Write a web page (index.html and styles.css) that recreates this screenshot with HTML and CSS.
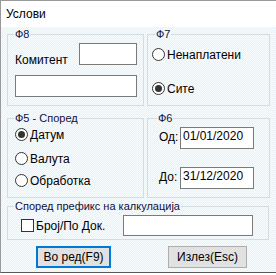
FILE: index.html
```html
<!DOCTYPE html>
<html lang="mk">
<head>
    <meta charset="UTF-8">
    <title>Услови</title>
    <link rel="stylesheet" href="styles.css">
</head>
<body>
    <div class="window">
        <div class="title">Услови</div>
        <div class="content">
            <div class="groups">
                <fieldset class="group g-f8">
                    <legend>Ф8</legend>
                    <div class="komitent">
                        <span class="komitent-label">Комитент</span>
                        <span class="textbox small"></span>
                    </div>
                    <span class="textbox wide"></span>
                </fieldset>

                <fieldset class="group g-f7">
                    <legend>Ф7</legend>
                    <label class="option"><span class="radio"></span>Ненаплатени</label>
                    <label class="option"><span class="radio checked"></span>Сите</label>
                </fieldset>

                <fieldset class="group g-f5">
                    <legend>Ф5 - Според</legend>
                    <label class="option"><span class="radio checked"></span>Датум</label>
                    <label class="option"><span class="radio"></span>Валута</label>
                    <label class="option"><span class="radio"></span>Обработка</label>
                </fieldset>

                <fieldset class="group g-f6">
                    <legend>Ф6</legend>
                    <div class="date-row">
                        <span class="date-label">Од:</span>
                        <span class="textbox date">01/01/2020</span>
                    </div>
                    <div class="date-row">
                        <span class="date-label">До:</span>
                        <span class="textbox date">31/12/2020</span>
                    </div>
                </fieldset>
            </div>

            <fieldset class="group g-prefix">
                <legend>Според префикс на калкулација</legend>
                <div class="prefix-row">
                    <label class="option"><span class="checkbox"></span>Број/По Док.</label>
                    <span class="textbox prefix"></span>
                </div>
            </fieldset>

            <div class="buttons">
                <button class="btn default">Во ред(F9)</button>
                <button class="btn cancel">Излез(Esc)</button>
            </div>
        </div>
    </div>
</body>
</html>
```

FILE: styles.css
```css
* {
    margin: 0;
    padding: 0;
    box-sizing: border-box;
}

body {
    font-family: 'Liberation Sans', Arial, sans-serif;
    font-size: 11px;
    color: #000;
    background: #fff;
}

.window {
    width: 276px;
    height: 273px;
    border-left: 1px solid #9a9a9a;
    border-top: 1px solid #9a9a9a;
    border-bottom: 1px solid #5a5a5a;
    display: flex;
    flex-direction: column;
}

.title {
    height: 26px;
    line-height: 26px;
    padding-left: 5px;
    font-size: 12px;
    background: #fff;
}

.content {
    flex: 1;
    padding: 1px 0 0 6px;
    background: repeating-conic-gradient(#e7f3fc 0 25%, #f6fbfe 0 50%) 0 0 / 2px 2px;
}

.groups {
    display: grid;
    grid-template-columns: 137px 123px;
    grid-template-rows: 78px 86px;
    column-gap: 3px;
    row-gap: 6px;
}

.group {
    border: 1px solid #d4dce3;
    display: flex;
    flex-direction: column;
}

.group legend {
    line-height: 13px;
    padding: 0 1px;
    color: #10103a;
}

.textbox {
    display: block;
    background: #fff;
    border: 1px solid #7a7a7a;
}

/* Ф8 */
.g-f8 {
    padding: 2px 6px 0 7px;
}

.g-f8 legend {
    margin-left: -1px;
}

.komitent {
    display: flex;
    align-items: flex-start;
    justify-content: space-between;
    height: 22px;
}

.komitent-label {
    margin-top: 10px;
    font-size: 12px;
}

.textbox.small {
    width: 58px;
    height: 22px;
}

.textbox.wide {
    width: 122px;
    height: 22px;
    margin-top: 10px;
}

/* radio / checkbox */
.option {
    display: flex;
    align-items: center;
    height: 15px;
    white-space: nowrap;
    font-size: 12px;
}

.radio {
    width: 13px;
    height: 13px;
    border: 1px solid #333;
    border-radius: 50%;
    background: #fff;
    margin-right: 2px;
    display: flex;
    align-items: center;
    justify-content: center;
}

.radio.checked::after {
    content: '';
    width: 7px;
    height: 7px;
    border-radius: 50%;
    background: #333;
}

.checkbox {
    width: 13px;
    height: 13px;
    border: 1px solid #333;
    background: #fff;
    margin-right: 2px;
}

/* Ф7 */
.g-f7 {
    padding: 6px 0 0 4px;
    gap: 19px;
}

.g-f7 legend {
    margin-left: 3px;
}

/* Ф5 */
.g-f5 {
    padding: 2px 0 0 7px;
    gap: 9px;
}

.g-f5 legend {
    margin-left: -1px;
}

.g-f5 .option:last-child {
    margin-top: -2px;
}

/* Ф6 */
.g-f6 {
    padding: 2px 0 0 11px;
    gap: 18px;
}

.g-f6 legend {
    margin-left: -2px;
}

.date-row {
    display: flex;
    align-items: flex-start;
}

.date-label {
    width: 21px;
    margin-top: 3px;
    font-size: 12px;
}

.textbox.date {
    width: 74px;
    height: 22px;
    padding: 1px 0 0 2px;
    font-size: 12px;
    line-height: 14px;
}

/* prefix */
.g-prefix {
    width: 262px;
    height: 40px;
    margin-top: 2px;
    padding: 2px 0 0 13px;
}

.g-prefix legend {
    margin-left: -7px;
}

.prefix-row {
    display: flex;
    align-items: center;
    height: 21px;
}

.prefix-row .option {
    width: 102px;
}

.textbox.prefix {
    width: 130px;
    height: 21px;
}

/* buttons */
.buttons {
    display: flex;
    gap: 57px;
    margin-top: 6px;
    padding-left: 29px;
}

.btn {
    height: 22px;
    font-family: inherit;
    font-size: 12px;
    background: #e1e1e1;
    color: #000;
}

.btn.default {
    width: 75px;
    border: 2px solid #0078d7;
}

.btn.cancel {
    width: 79px;
    border: 1px solid #adadad;
}
```
